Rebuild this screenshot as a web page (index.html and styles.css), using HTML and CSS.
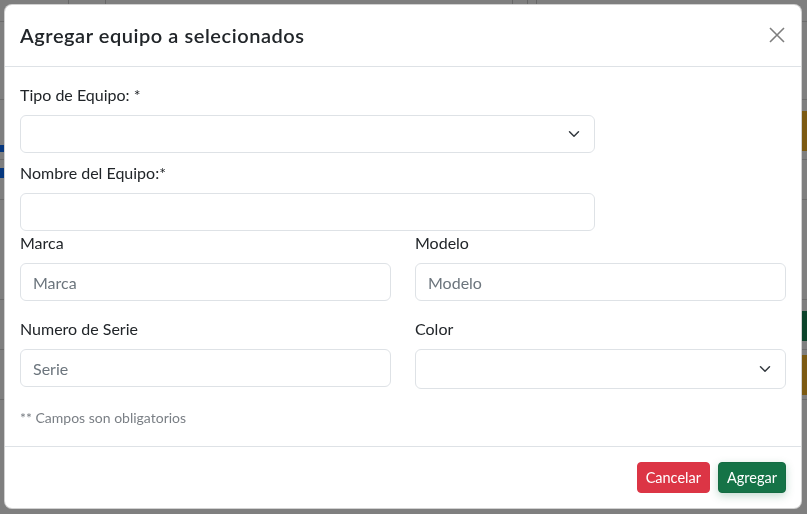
FILE: index.html
```html
<!DOCTYPE html>
<html lang="es">
<head>
<meta charset="utf-8">
<title>Agregar equipo</title>
<link rel="stylesheet" href="styles.css">
</head>
<body>
<div class="page">
  <div class="prow prow-head">
    <span class="pcol c1"></span><span class="pcol c2"></span><span class="pcol c3"></span><span class="pcol c4"></span><span class="pcol c5"></span>
  </div>
  <div class="prow prow-a"></div>
  <div class="prow prow-b"><span class="plink plink-1"></span><span class="pbtn pbtn-warn"></span></div>
  <div class="prow prow-c"><span class="plink plink-2"></span></div>
  <div class="prow prow-d"></div>
  <div class="prow prow-e"><span></span><span class="pbtn pbtn-ok">g</span></div>
  <div class="prow prow-f"><span></span><span class="pbtn pbtn-warn2"></span></div>
  <div class="prow prow-g"></div>
</div>
<div class="backdrop"></div>

<div class="modal">
  <div class="modal-content">
    <div class="modal-header">
      <h5 class="modal-title">Agregar equipo a selecionados</h5>
      <button type="button" class="btn-close" aria-label="Cerrar">
        <svg width="16" height="16" viewBox="0 0 16 16"><path d="M1 1 L15 15 M15 1 L1 15" stroke="#000" stroke-width="1.6" fill="none"/></svg>
      </button>
    </div>
    <div class="modal-body">
      <div class="field w75">
        <label class="form-label">Tipo de Equipo: *</label>
        <div class="select-wrap">
          <select class="form-select"><option></option></select>
          <svg class="chev" width="16" height="12" viewBox="0 0 16 16"><path d="m2 5 6 6 6-6" stroke="#343a40" stroke-width="2" stroke-linecap="round" stroke-linejoin="round" fill="none"/></svg>
        </div>
      </div>
      <div class="field w75 mt8">
        <label class="form-label">Nombre del Equipo:*</label>
        <input class="form-control" type="text">
      </div>
      <div class="row">
        <div class="col">
          <label class="form-label">Marca</label>
          <input class="form-control" type="text" placeholder="Marca">
        </div>
        <div class="col">
          <label class="form-label">Modelo</label>
          <input class="form-control" type="text" placeholder="Modelo">
        </div>
      </div>
      <div class="row mt16">
        <div class="col">
          <label class="form-label">Numero de Serie</label>
          <input class="form-control" type="text" placeholder="Serie">
        </div>
        <div class="col">
          <label class="form-label">Color</label>
          <div class="select-wrap">
            <select class="form-select tall"><option></option></select>
            <svg class="chev" width="16" height="12" viewBox="0 0 16 16"><path d="m2 5 6 6 6-6" stroke="#343a40" stroke-width="2" stroke-linecap="round" stroke-linejoin="round" fill="none"/></svg>
          </div>
        </div>
      </div>
      <div class="note"><small>** Campos son obligatorios</small></div>
    </div>
    <div class="modal-footer">
      <button type="button" class="btn btn-danger">Cancelar</button>
      <button type="button" class="btn btn-success">Agregar</button>
    </div>
  </div>
</div>
</body>
</html>
```

FILE: styles.css
```css
* { box-sizing: border-box; }
html, body { margin: 0; padding: 0; }
body {
  width: 807px;
  height: 514px;
  overflow: hidden;
  font-family: "Lato", "Noto Sans", sans-serif;
  font-size: 16px;
  line-height: 1.5;
  color: #212529;
  background: #fff;
}

/* page behind the dialog */
.page { display: flex; flex-direction: column; width: 807px; height: 514px; }
.prow { display: flex; justify-content: space-between; align-items: flex-start; border-bottom: 1px solid #d8d8d8; }
.prow-head { height: 22px; justify-content: flex-start; }
.pcol { height: 100%; border-right: 1px solid #cfcfcf; }
.c1 { width: 69px; } .c2 { width: 37px; } .c3 { width: 407px; } .c4 { width: 15px; } .c5 { width: 9px; }
.prow-a { height: 78px; }
.prow-b { height: 60px; }
.prow-c { height: 40px; }
.prow-d { height: 100px; }
.prow-e { height: 50px; }
.prow-f { height: 50px; }
.prow-g { flex: 1; border-bottom: 0; }
.plink { display: block; width: 40px; background: #0d6efd; }
.plink-1 { height: 7px; margin-top: 45px; }
.plink-2 { height: 10px; margin-top: 8px; }
.pbtn { display: block; width: 60px; border-radius: 4px 0 0 4px; }
.pbtn-warn { height: 40px; margin-top: 11px; background: #f9b425; }
.pbtn-ok { height: 30px; margin-top: 11px; background: #198754; color: #fff; font-size: 14px; line-height: 30px; padding-left: 2px; text-decoration: underline; }
.pbtn-warn2 { height: 40px; margin-top: 5px; background: #f9b425; }

.backdrop { position: fixed; inset: 0; background: rgba(0, 0, 0, 0.5); }

/* modal */
.modal { position: fixed; inset: 0; padding: 4px 5px 5px 4px; }
.modal-content {
  width: 798px;
  background: #fff;
  border: 1px solid rgba(0, 0, 0, 0.18);
  border-radius: 8px;
  display: flex;
  flex-direction: column;
  overflow: hidden;
}
.modal-header {
  display: flex;
  align-items: center;
  justify-content: space-between;
  padding: 15px 16px 16px 15px;
  border-bottom: 1px solid #dee2e6;
}
.modal-title { margin: 0; font-size: 20px; font-weight: 600; line-height: 30px; letter-spacing: 0.55px; }
.btn-close {
  width: 24px; height: 24px; padding: 4px; margin-right: -4px;
  border: 0; background: transparent; opacity: 0.5;
  display: flex; align-items: center; justify-content: center;
}
.btn-close svg { display: block; }

.modal-body { padding: 16px 15px 16px 15px; display: flex; flex-direction: column; }
.field { display: flex; flex-direction: column; }
.w75 { width: 75%; }
.mt8 { margin-top: 8px; }
.mt16 { margin-top: 16px; }
.form-label { display: block; margin-bottom: 8px; line-height: 24px; }
.form-control, .form-select {
  display: block;
  width: 100%;
  height: 38px;
  padding: 6px 12px;
  font: inherit;
  font-size: 16px;
  line-height: 24px;
  color: #212529;
  background: #fff;
  border: 1px solid #dee2e6;
  border-radius: 6px;
  appearance: none;
  -webkit-appearance: none;
  outline: none;
}
.form-control::placeholder { color: #6c757d; opacity: 1; }
.form-select.tall { height: 40px; }
.select-wrap { position: relative; }
.chev { position: absolute; right: 13px; top: 50%; margin-top: -6px; pointer-events: none; }

.row { display: flex; gap: 24px; }
.col { flex: 1; display: flex; flex-direction: column; min-width: 0; }
.note { margin-top: 16px; line-height: 24px; }
.note small { font-size: 14px; color: #7a7f85; }

.modal-footer {
  display: flex;
  justify-content: flex-end;
  gap: 8px;
  padding: 15px 15px 15px 16px;
  border-top: 1px solid #dee2e6;
}
.btn {
  font: inherit;
  font-size: 14.5px;
  line-height: 21px;
  padding: 4px 8px;
  border-radius: 4px;
  border: 1px solid transparent;
  color: #fff;
}
.btn-danger { background: #dc3545; border-color: #dc3545; }
.btn-success { background: #157347; border-color: #146c43; box-shadow: 0 3px 8px rgba(20, 108, 67, 0.25); }
```
